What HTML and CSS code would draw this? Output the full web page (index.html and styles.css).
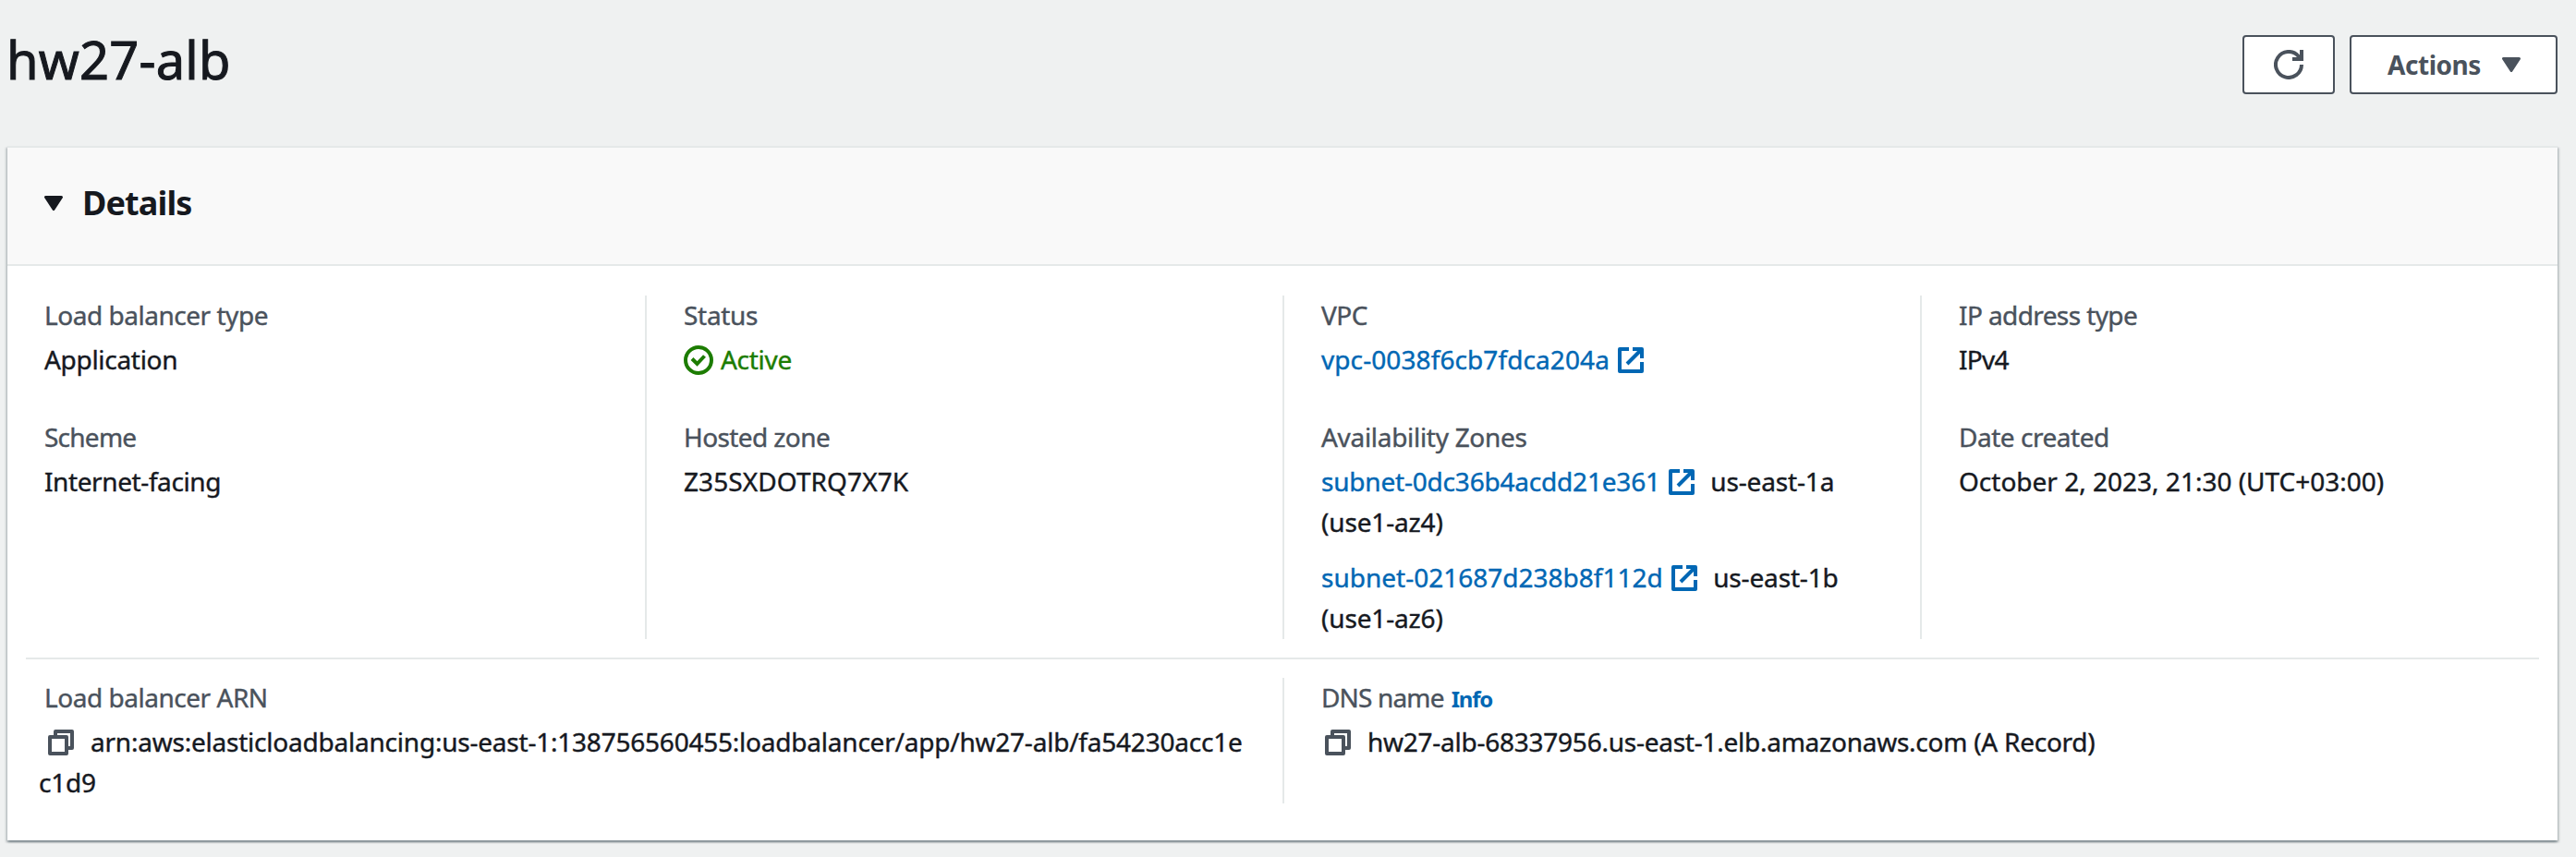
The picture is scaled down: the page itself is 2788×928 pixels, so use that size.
FILE: index.html
```html
<!DOCTYPE html>
<html lang="en">
<head>
<meta charset="utf-8">
<title>hw27-alb</title>
<link rel="stylesheet" href="styles.css">
</head>
<body>
<svg class="defs" width="0" height="0" aria-hidden="true">
  <symbol id="caret" viewBox="0 0 20 16"><path d="M1.500 1.500H18.500L10 14.500Z" fill="currentColor" stroke="currentColor" stroke-width="3" stroke-linejoin="round"/></symbol>
  <symbol id="external" viewBox="0 0 28 28"><path d="M12 2H2V26H26V16M16 2H26V12M26 2L10 18" fill="none" stroke="currentColor" stroke-width="4" stroke-linejoin="round"/></symbol>
  <symbol id="copy" viewBox="0 0 28 28"><path d="M2 8H20V26H2ZM8 8V2H26V20H20" fill="none" stroke="currentColor" stroke-width="4" stroke-linejoin="round"/></symbol>
</svg>
<header class="page-header">
  <h1 class="title">hw27-alb</h1>
  <div class="buttons">
    <button class="btn btn-refresh" aria-label="Refresh">
      <svg class="icon-32" viewBox="0 0 32 32"><path d="M30 16A14 14 0 1 1 26.500 6.700L29 9.500M30 0V10H20" fill="none" stroke="currentColor" stroke-width="4"/></svg>
    </button>
    <button class="btn btn-actions"><span>Actions</span><svg class="caret"><use href="#caret"/></svg></button>
  </div>
</header>
<section class="card">
  <div class="card-header">
    <svg class="caret"><use href="#caret"/></svg>
    <h2 class="card-title">Details</h2>
  </div>
  <div class="row row-4">
    <div class="col">
      <div class="field"><div class="label">Load balancer type</div><div class="value t-word">Application</div></div>
      <div class="field"><div class="label t-scheme">Scheme</div><div class="value t-facing">Internet-facing</div></div>
    </div>
    <div class="col">
      <div class="field"><div class="label t-word">Status</div><div class="value status t-word"><svg class="icon-32 status-icon" viewBox="0 0 32 32"><circle cx="16" cy="16" r="14" fill="none" stroke="currentColor" stroke-width="4"/><path d="M9 14.500L14.500 20L22.500 11.500" fill="none" stroke="currentColor" stroke-width="4"/></svg>Active</div></div>
      <div class="field"><div class="label t-narrow">Hosted zone</div><div class="value t-wide">Z35SXDOTRQ7X7K</div></div>
    </div>
    <div class="col">
      <div class="field"><div class="label">VPC</div><div class="value"><a class="link t-wide">vpc-0038f6cb7fdca204a<svg class="icon-28 ext"><use href="#external"/></svg></a></div></div>
      <div class="field"><div class="label t-word">Availability Zones</div>
        <div class="value zone"><a class="link t-subnet">subnet-0dc36b4acdd21e361<svg class="icon-28 ext"><use href="#external"/></svg></a><span class="az">us-east-1a<br></span>(use1-az4)</div>
        <div class="value zone"><a class="link t-plain">subnet-021687d238b8f112d<svg class="icon-28 ext"><use href="#external"/></svg></a><span class="az">us-east-1b<br></span>(use1-az6)</div>
      </div>
    </div>
    <div class="col">
      <div class="field"><div class="label t-narrow">IP address type</div><div class="value t-ipv">IPv4</div></div>
      <div class="field"><div class="label">Date created</div><div class="value t-plain">October 2, 2023, 21:30 (UTC+03:00)</div></div>
    </div>
  </div>
  <hr class="rule">
  <div class="row row-2">
    <div class="col">
      <div class="field"><div class="label">Load balancer ARN</div><div class="value arn"><svg class="icon-28 copy"><use href="#copy"/></svg>arn:aws:elasticloadbalancing:us-east-1:138756560455:loadbalancer/app/hw27-alb/fa54230acc1e<br>c1d9</div></div>
    </div>
    <div class="col">
      <div class="field"><div class="label t-dns">DNS name<a class="info">Info</a></div><div class="value dns"><svg class="icon-28 copy"><use href="#copy"/></svg>hw27-alb-68337956.us-east-1.elb.amazonaws.com (A Record)</div></div>
    </div>
  </div>
</section>
</body>
</html>
```

FILE: styles.css
```css
* { box-sizing: border-box; }

body {
  margin: 0;
  padding: 0 20px 0 8px;
  height: 928px;
  overflow: hidden;
  background: #eff1f1;
  color: #16191f;
  font-family: "Noto Sans", "Open Sans", sans-serif;
  font-size: 28px;
  line-height: 44px;
  -webkit-text-stroke: 0.4px currentColor;
}

.defs { display: none; }

.page-header {
  display: flex;
  justify-content: space-between;
  align-items: flex-start;
  height: 158px;
}

.title {
  margin: 28px 0 0 -1px;
  font-size: 56px;
  font-weight: 400;
  line-height: 72px;
  letter-spacing: 0.2px;
  -webkit-text-stroke-width: 1px;
}

.buttons {
  display: flex;
  gap: 16px;
  margin-top: 38px;
}

.btn {
  display: flex;
  align-items: center;
  height: 64px;
  border: 2px solid #4a525c;
  border-radius: 4px;
  background: #fff;
  color: #4a525c;
  font: 700 28px/42px "Noto Sans", "Open Sans", sans-serif;
  letter-spacing: -0.45px;
  -webkit-text-stroke: 0;
}

.btn-refresh {
  justify-content: center;
  width: 100px;
  padding: 0;
}

.btn-actions {
  justify-content: space-between;
  width: 225px;
  padding: 0 38px 0 39px;
}

.caret {
  display: block;
  width: 20px;
  height: 16px;
}

.icon-32 { width: 32px; height: 32px; }
.icon-28 { width: 28px; height: 28px; }

.card {
  height: 752px;
  border-top: 2px solid #e5e9e9;
  background: #fff;
  box-shadow:
    0 2px 2px 0 rgba(0, 28, 36, 0.3),
    2px 2px 2px 0 rgba(0, 28, 36, 0.15),
    -2px 2px 2px 0 rgba(0, 28, 36, 0.15);
}

.card-header {
  display: flex;
  align-items: flex-start;
  gap: 21px;
  height: 128px;
  padding: 38px 40px 0;
  border-bottom: 2px solid #e5e9e9;
  background: #f9f9f9;
}

.card-header .caret { margin-top: 14px; }

.card-title {
  margin: 0;
  font-size: 36px;
  font-weight: 700;
  line-height: 44px;
  letter-spacing: -0.88px;
  -webkit-text-stroke: 0;
}

.row { display: grid; }

.row-4 {
  grid-template-columns: repeat(4, 1fr);
  height: 372px;
  margin-top: 32px;
}

.row-2 {
  grid-template-columns: repeat(2, 1fr);
  height: 136px;
}

.col {
  display: flex;
  flex-direction: column;
  gap: 41px;
  min-width: 0;
  padding-left: 40px;
  white-space: nowrap;
}

.col + .col { border-left: 2px solid #e5e9e9; }

.rule {
  height: 2px;
  margin: 20px;
  border: 0;
  background: #e5e9e9;
}

.label {
  margin-bottom: 5px;
  color: #4a525c;
  line-height: 42px;
  height: 42px;
  letter-spacing: -0.47px;
}

.value { min-height: 44px; }
.field > .value:not(.zone) { height: 44px; }
.zone + .zone { margin-top: 16px; }
.zone { height: 88px; letter-spacing: -0.15px; }

.status { color: #1c7c00; }
.status-icon { margin-right: 8px; vertical-align: -6px; }

.link { color: #0067b4; }
.ext { margin: 0 17.500px 0 9px; vertical-align: -4px; }

.copy {
  margin: 0 18px 0 4px;
  color: #4a525c;
  vertical-align: -4px;
}

.arn {
  margin-left: -6px;
  letter-spacing: -0.22px;
}

.arn .copy { margin-left: 10px; }
.dns { letter-spacing: -0.25px; }

.info {
  margin-left: 8px;
  color: #0067b4;
  font-size: 24px;
  font-weight: 700;
  letter-spacing: -1.2px;
  -webkit-text-stroke: 0;
}

/* Tracking adjustments */
.t-word { letter-spacing: -0.3px; }
.t-scheme { letter-spacing: -0.75px; }
.t-facing { letter-spacing: -0.4px; }
.t-narrow { letter-spacing: -0.6px; }
.t-wide { letter-spacing: 0.09px; }
.t-subnet { letter-spacing: -0.2px; }
.t-ipv { letter-spacing: -0.7px; }
.t-plain { letter-spacing: 0; }
.t-dns { letter-spacing: -0.84px; }
```
